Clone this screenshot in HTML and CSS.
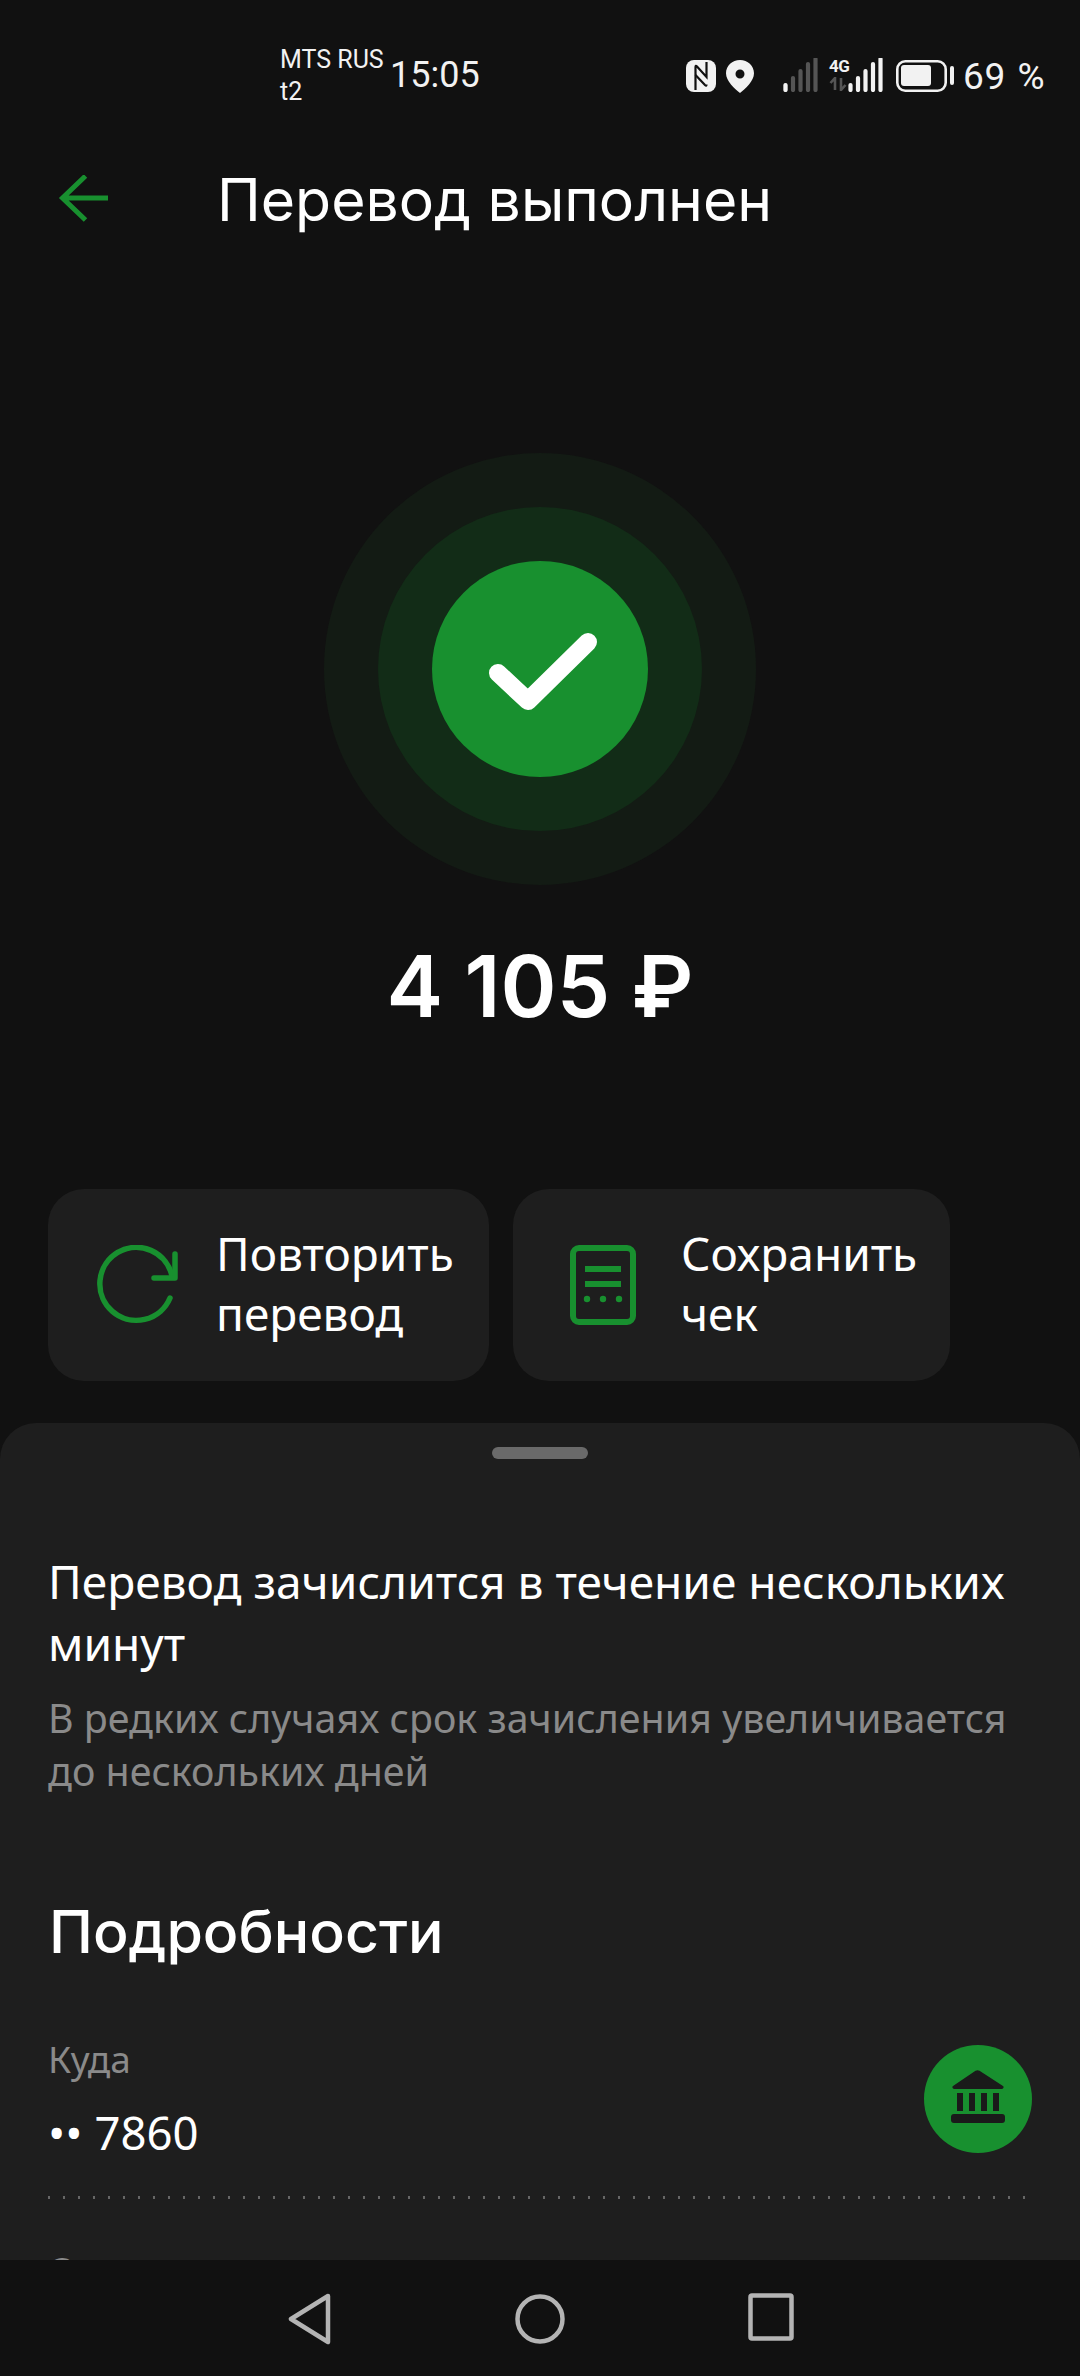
FILE: index.html
```html
<!DOCTYPE html>
<html lang="ru">
<head>
<meta charset="utf-8">
<title>Перевод выполнен</title>
<link rel="stylesheet" href="styles.css">
</head>
<body>
<div class="screen">
  <header class="status">
    <div class="carrier"><span>MTS RUS</span><span>t2</span></div>
    <div class="time">15:05</div>
    <div class="status-right">
      <svg class="ic-nfc" width="30" height="32" viewBox="0 0 30 32"><rect width="30" height="32" rx="8" fill="#f2f2f2"/><path d="M9.500 30V7q0-2 1.500-.5L20.500 17V2" fill="none" stroke="#111" stroke-width="2.200"/><path d="M9.500 15 19 25q1.500 1.500 1.500-.5" fill="none" stroke="#111" stroke-width="2.200"/></svg>
      <svg class="ic-loc" width="28" height="33" viewBox="0 0 28 33"><path fill-rule="evenodd" d="M14 0c7.700 0 14 5.800 14 13.200 0 8-8.600 15.300-14 19.800C8.600 28.500 0 21.200 0 13.200 0 5.800 6.300 0 14 0zm0 9.500a4.500 4.500 0 1 0 0 9 4.500 4.500 0 0 0 0-9z" fill="#f2f2f2"/></svg>
      <svg class="ic-sig1" width="36" height="34" viewBox="0 0 36 34"><path d="M2.500 27v5M10 20v12M17.500 13v19M25 6v26M32.500 1v31" stroke="#555" stroke-width="4.200" stroke-linecap="round"/><path d="M2.500 27v5" stroke="#f2f2f2" stroke-width="4.200" stroke-linecap="round"/></svg>
      <div class="net"><span>4G</span><svg width="18" height="14" viewBox="0 0 18 14"><path d="M6 13V1L1.500 6M12 1v12l4.500-5" fill="none" stroke="#555" stroke-width="2.600"/></svg></div>
      <svg class="ic-sig2" width="36" height="34" viewBox="0 0 36 34"><path d="M2.500 27v5M10 20v12M17.500 13v19M25 6v26M32.500 1v31" stroke="#f2f2f2" stroke-width="4.200" stroke-linecap="round"/></svg>
      <svg class="ic-bat" width="58" height="32" viewBox="0 0 58 32"><rect x="1.300" y="1.300" width="48.400" height="29.400" rx="8" fill="none" stroke="#f2f2f2" stroke-width="2.600"/><rect x="5" y="5" width="30" height="21" rx="3" fill="#f2f2f2"/><rect x="54" y="6" width="4" height="19" rx="2" fill="#f2f2f2"/></svg>
      <div class="pct">69 %</div>
    </div>
  </header>

  <div class="appbar">
    <svg class="back" width="50" height="50" viewBox="0 0 50 50"><path d="M50 23H5M27.500 1 4.500 23 27.500 45" fill="none" stroke="#18902f" stroke-width="5"/></svg>
    <h1 class="title">Перевод выполнен</h1>
  </div>

  <section class="hero">
    <div class="ring-outer"><div class="ring-mid"><div class="ring-inner">
      <svg width="216" height="216" viewBox="0 0 216 216"><path d="M66 112l30 28 60-59" fill="none" stroke="#fff" stroke-width="18" stroke-linecap="round" stroke-linejoin="round"/></svg>
    </div></div></div>
    <div class="amount">4 105 ₽</div>
  </section>

  <div class="actions">
    <div class="action action-a">
      <svg class="action-ic action-ic-repeat" width="84" height="84" viewBox="0 0 84 84"><path d="M74 53A36.500 36.500 0 1 1 76 31" fill="none" stroke="#18902f" stroke-width="5.500" stroke-linecap="round"/><path d="M79 9v24H58" fill="none" stroke="#18902f" stroke-width="5.500" stroke-linecap="round" stroke-linejoin="round"/></svg>
      <div class="action-text">Повторить<br>перевод</div>
    </div>
    <div class="action action-b">
      <svg class="action-ic" width="70" height="80" viewBox="0 0 70 80"><rect x="5" y="3" width="60" height="74" rx="6" fill="none" stroke="#18902f" stroke-width="6"/><path d="M17 24h36M17 39h36" stroke="#18902f" stroke-width="6"/><circle cx="19" cy="54" r="3.200" fill="#18902f"/><circle cx="35" cy="54" r="3.200" fill="#18902f"/><circle cx="51" cy="54" r="3.200" fill="#18902f"/></svg>
      <div class="action-text">Сохранить<br>чек</div>
    </div>
  </div>

  <main class="sheet">
    <div class="handle"></div>
    <h2 class="notice">Перевод зачислится в течение нескольких минут</h2>
    <p class="hint">В редких случаях срок зачисления увеличивается до нескольких дней</p>
    <h2 class="section">Подробности</h2>
    <div class="row">
      <div>
        <div class="label">Куда</div>
        <div class="value"><span class="dots">••</span> 7860</div>
      </div>
      <div class="bank">
        <svg width="108" height="108" viewBox="0 0 108 108"><path d="M51.500 25.800a4 4 0 0 1 4 0L79 41a1.700 1.700 0 0 1-1 3H30a1.700 1.700 0 0 1-1-3z" fill="#1a1a1a"/><path d="M33 48h6v18h-6zM45 48h6v18h-6zM57 48h6v18h-6zM69 48h6v18h-6z" fill="#1a1a1a"/><rect x="27" y="69" width="54" height="9" rx="3" fill="#1a1a1a"/></svg>
      </div>
    </div>
    <div class="divider"></div>
    <div class="label next">Откуда</div>
  </main>

  <nav class="navbar">
    <svg width="44" height="52" viewBox="0 0 44 52"><path d="M40 3 3 26l37 23z" fill="none" stroke="#b4b4b4" stroke-width="4.500" stroke-linejoin="round"/></svg>
    <svg width="52" height="52" viewBox="0 0 52 52"><circle cx="26" cy="26" r="22.500" fill="none" stroke="#b4b4b4" stroke-width="4.500"/></svg>
    <svg width="46" height="48" viewBox="0 0 46 48"><rect x="2.500" y="2.500" width="41" height="43" rx="1.500" fill="none" stroke="#b4b4b4" stroke-width="4.500"/></svg>
  </nav>
</div>
</body>
</html>
```
FILE: styles.css
```css
* { box-sizing: border-box; }
html, body { margin: 0; padding: 0; background: #111; }
.screen {
  width: 1080px; height: 2376px; overflow: hidden;
  display: flex; flex-direction: column;
  background: #111; color: #fff;
  font-family: "Noto Sans", sans-serif;
}
.status {
  height: 130px; flex: none;
  display: flex; align-items: flex-start;
  padding: 44px 0 0 280px;
  color: #f2f2f2;
  font-family: Roboto, sans-serif;
}
.carrier { display: flex; flex-direction: column; font-size: 25px; line-height: 32px; width: 110px; flex: none; white-space: nowrap; }
.time { font-size: 36px; line-height: 40px; margin-top: 11px; width: 296px; flex: none; }
.status-right { display: flex; align-items: flex-start; margin-top: 14px; }
.ic-nfc { margin-top: 2px; }
.ic-loc { margin: 2px 0 0 10px; }
.ic-sig1 { margin-left: 29px; }
.net { width: 19px; margin-left: 10px; display: flex; flex-direction: column; font-size: 17px; line-height: 17px; font-weight: 700; letter-spacing: -0.5px; white-space: nowrap; }
.net svg { margin-top: 2px; }
.ic-bat { margin: 2px 0 0 12px; }
.pct { font-size: 37px; line-height: 40px; margin: -1px 0 0 9px; white-space: nowrap; letter-spacing: 0.6px; word-spacing: 2px; }

.appbar { height: 140px; flex: none; display: flex; align-items: flex-start; padding-left: 58px; }
.back { margin-top: 45px; }
.title { margin: 30px 0 0 109px; font: 400 58.900px/80px Inter, sans-serif; white-space: nowrap; }

.hero { height: 919px; flex: none; display: flex; flex-direction: column; align-items: center; padding-top: 183px; }
.ring-outer, .ring-mid, .ring-inner { border-radius: 50%; display: flex; align-items: center; justify-content: center; }
.ring-outer { width: 432px; height: 432px; background: #131b14; flex: none; }
.ring-mid { width: 324px; height: 324px; background: #122c17; }
.ring-inner { width: 216px; height: 216px; background: #18902f; }
.amount { margin-top: 52px; font: 600 85px/100px Inter, sans-serif; }

.actions { flex: none; display: flex; gap: 24px; padding-left: 48px; height: 234px; }
.action { height: 192px; border-radius: 36px; background: #1e1e1e; display: flex; align-items: center; }
.action-a { width: 441px; padding-left: 48px; }
.action-b { width: 437px; padding-left: 55px; }
.action-ic { flex: none; }
.action-ic-repeat { margin-top: 3px; }
.action-text { font-size: 46px; line-height: 60px; margin-left: 36px; padding-bottom: 4px; }
.action-b .action-text { margin-left: 43px; }

.sheet { flex: 1; min-height: 0; overflow: hidden; background: #1e1e1e; border-radius: 36px 36px 0 0; padding: 24px 48px 0; }
.handle { width: 96px; height: 12px; border-radius: 6px; background: #6a6a6a; margin: 0 auto; }
.notice { margin: 92px 0 0; font-size: 46.100px; line-height: 62px; font-weight: 400; }
.hint { margin: 17px 0 0; font-size: 39.400px; line-height: 53px; color: #8a8a8a; }
.section { margin: 94px 0 0 1px; font: 500 59px/80px Inter, sans-serif; }
.row { display: flex; justify-content: space-between; align-items: flex-start; margin-top: 64px; }
.label { font-size: 37px; line-height: 46px; color: #8a8a8a; }
.value { font-size: 45.500px; line-height: 60px; margin-top: 20px; }
.dots { font-size: 46px; }
.bank { width: 108px; height: 108px; border-radius: 50%; background: #18902f; margin-top: 9px; }
.bank svg { display: block; }
.divider { height: 3px; margin: 34px 6px 0 0; background: repeating-linear-gradient(90deg, #666 0 2px, transparent 2px 15px); }
.next { margin-top: 48px; }

.navbar { height: 116px; flex: none; background: #111; display: flex; align-items: flex-start; padding: 33px 0 0 288px; gap: 182px; }
```
